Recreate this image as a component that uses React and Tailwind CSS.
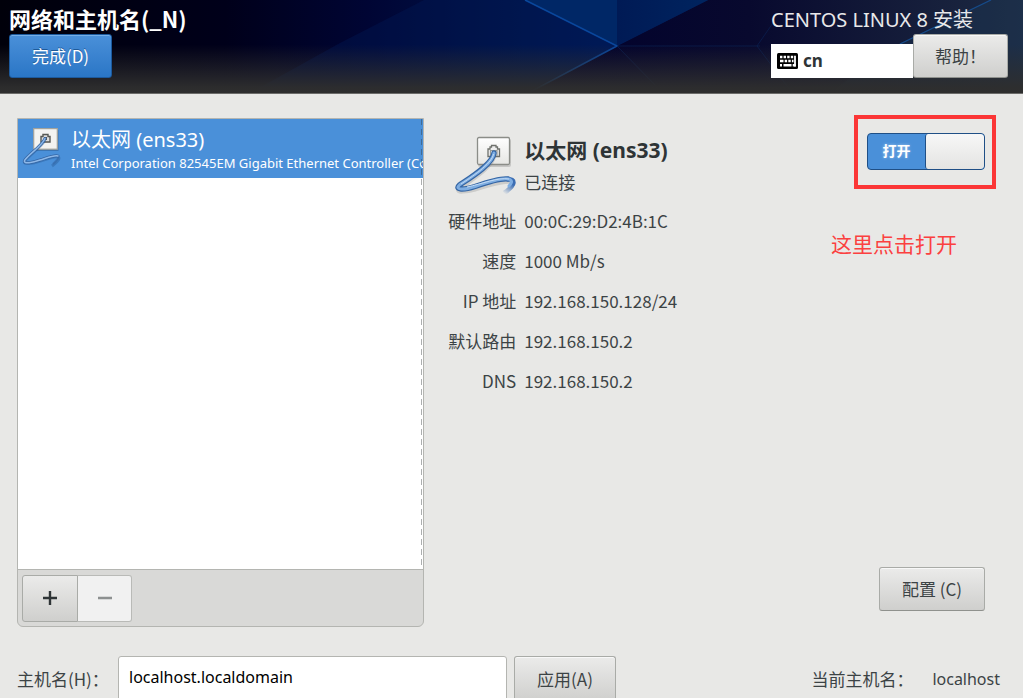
import { useId, useState } from "react";

const greyButton =
  "flex items-center justify-center rounded-[3px] border border-[#a9aba7] border-b-[#8f918d] bg-linear-to-b from-[#ebebea] to-[#cfcfcd] text-[17px] leading-6 text-[#3c4345] shadow-[inset_0_1px_0_#f8f8f8]";

const details = [
  ["硬件地址", "00:0C:29:D2:4B:1C"],
  ["速度", "1000 Mb/s"],
  ["IP 地址", "192.168.150.128/24"],
  ["默认路由", "192.168.150.2"],
  ["DNS", "192.168.150.2"],
];

function HeaderArt() {
  return (
    <svg
      className="absolute inset-0 h-full w-full"
      viewBox="0 0 1023 93"
      preserveAspectRatio="none"
      aria-hidden="true"
    >
      <defs>
        <linearGradient id="sky" x1="0" x2="1" y1="0" y2="0">
          <stop offset="0" stopColor="#00000a" />
          <stop offset="0.22" stopColor="#00001a" />
          <stop offset="0.36" stopColor="#000534" />
          <stop offset="0.48" stopColor="#001246" />
          <stop offset="0.6" stopColor="#001a58" />
        </linearGradient>
        <linearGradient id="night" x1="0" x2="1" y1="0" y2="0">
          <stop offset="0" stopColor="#00002c" />
          <stop offset="0.45" stopColor="#08092e" />
          <stop offset="1" stopColor="#1d2a42" />
        </linearGradient>
        <linearGradient id="beam" x1="0" x2="1" y1="0" y2="0">
          <stop offset="0" stopColor="#001a55" />
          <stop offset="1" stopColor="#00245f" />
        </linearGradient>
        <linearGradient id="ground" x1="0" x2="0" y1="0" y2="1">
          <stop offset="0.48" stopColor="#2e2e2e" stopOpacity="0" />
          <stop offset="0.94" stopColor="#2e2e2e" stopOpacity="0.96" />
          <stop offset="1" stopColor="#2e2e2e" />
        </linearGradient>
      </defs>
      <rect width="1023" height="93" fill="url(#sky)" />
      <path d="M340 43L424 0H525L617 46L525 93H250Z" fill="#001a56" opacity="0.4" />
      <path d="M617 46L525 93H1023V0H708Z" fill="url(#night)" />
      <path d="M525 0H617V46Z" fill="#002766" />
      <path d="M617 0H708L617 46Z" fill="url(#beam)" />
      <path d="M525 0L617 46L530 92" fill="none" stroke="#0a479c" strokeWidth="1.6" />
      <path d="M617 46L655 85M617 46H760M757 46L775 20M757 46L790 90" fill="none" stroke="#0c2458" strokeWidth="1" opacity="0.6" />
      <path d="M890 48L991 0H1023V93H830Z" fill="#1c3857" opacity="0.35" />
      <path d="M900 44L991 0" stroke="#164b8a" strokeWidth="1.3" />
      <rect width="1023" height="93" fill="url(#ground)" />
    </svg>
  );
}

function KeyboardIcon() {
  return (
    <svg className="h-4 w-[21px] shrink-0" viewBox="0 0 21 16" aria-hidden="true">
      <rect width="21" height="16" rx="1.5" fill="#000" />
      <path d="M3 4H16.200" stroke="#fff" strokeWidth="2.6" strokeDasharray="2.400 1.200" />
      <path d="M3 8H6.500M7.700 8H10.100M11.300 8H13.700M14.900 8H16.500" stroke="#fff" strokeWidth="2.6" />
      <path d="M3 12.200H5M6.500 12.200H14.500M15.700 12.200H18.700" stroke="#fff" strokeWidth="2.4" />
      <path d="M18 2.700V13.400" stroke="#fff" strokeWidth="1.8" />
    </svg>
  );
}

function WiredIcon({ className }) {
  const id = useId();
  return (
    <svg className={className} viewBox="0 0 62 60" aria-hidden="true">
      <defs>
        <linearGradient id={id} x1="0" x2="0" y1="0" y2="1">
          <stop offset="0" stopColor="#fff" />
          <stop offset="1" stopColor="#e6e6e3" />
        </linearGradient>
        <linearGradient id={id + "c"} gradientUnits="userSpaceOnUse" x1="58" x2="50" y1="45" y2="58">
          <stop offset="0.2" stopColor="#3c6eb4" />
          <stop offset="1" stopColor="#3c6eb4" stopOpacity="0" />
        </linearGradient>
      </defs>
      <rect x="23" y="3" width="33" height="28" rx="2" fill="#777" opacity="0.3" />
      <rect x="22.5" y="1.5" width="32" height="27" rx="1.5" fill={`url(#${id})`} stroke="#8b8d88" strokeWidth="1.3" />
      <path d="M33 20.500V13H35V11H36.500V9.500H41V11H42.500V13H44.500V20.500Z" fill="#eee" stroke="#6f716c" strokeWidth="1.3" />
      <path d="M35.500 20V14.500H42V20" fill="none" stroke="#999b95" strokeWidth="1.2" />
      <path d="M39 20C36 32 15 44 5 52C-1 57 13 55 20 53C33 49 52 43 57 46" fill="none" stroke="#777" strokeOpacity="0.25" strokeWidth="5" />
      <path d="M39 17C38 28 15 42 4.500 49C-1 54 9 54 20 50.500C33 46 46 42 53 43" fill="none" stroke="#3465a4" strokeWidth="5.4" strokeLinecap="round" />
      <path d="M52 43C61 43 61 49 49 57" fill="none" stroke={`url(#${id}c)`} strokeWidth="4.600" />
      <path d="M39 17C38 28 15 42 4.500 49C-1 54 9 54 20 50.500C33 46 50 41 55 43.500C58 45 56 48 54 50" fill="none" stroke="#7faee2" strokeWidth="3" strokeLinecap="round" />
      <path d="M38.500 18C37 28 15 42 6 48M12 51C27 48 43 41 54 43" fill="none" stroke="#c3dbf5" strokeWidth="1" />
    </svg>
  );
}

function SmallWiredIcon({ className }) {
  return (
    <svg className={className} viewBox="0 0 40 42" aria-hidden="true">
      <rect x="12.500" y="2" width="24" height="21" fill="#274d77" opacity="0.4" />
      <rect x="11.700" y="0.600" width="23.600" height="20.600" fill="#f3f3f1" stroke="#a3a39c" strokeWidth="1.2" />
      <path d="M19 14V8.500H21V6.500H26V8.500H28V14Z" fill="#ddd" stroke="#555753" strokeWidth="1.4" />
      <rect x="22" y="9" width="3" height="3" fill="#555753" />
      <path d="M23 12C20 19 7 27 2.500 33.500C1 37 11 35.500 18 33C27 30 36 27.500 37 30C37 32 34 35 30 38" fill="none" stroke="#1f4f8a" strokeOpacity="0.35" strokeWidth="3" />
      <path d="M23 10.500C20 18 7 26 2.500 32.500C1 36.500 11 34.500 18 32C26 29.500 33 26.500 36 28" fill="none" stroke="#3465a4" strokeWidth="3" strokeLinecap="round" />
      <path d="M36 28C37.500 30 34 33 31 36" fill="none" stroke="#3465a4" strokeOpacity="0.5" strokeWidth="2" />
      <path d="M23 10.500C20 18 7 26 2.500 32.500C1 36.500 11 34.500 18 32C26 29.500 33 26.500 36 28" fill="none" stroke="#8db8e8" strokeWidth="1.500" strokeLinecap="round" />
    </svg>
  );
}

export default function App() {
  const [on, setOn] = useState(true);
  const [host, setHost] = useState("localhost.localdomain");

  return (
    <div className="flex h-screen flex-col overflow-hidden bg-[#e8e8e6] font-['Noto_Sans_CJK_SC',sans-serif] text-[17px] leading-6 text-[#3c4345]">
      <header className="relative shrink-0 border-b border-[#6b6b69] bg-[#00001a]">
        <HeaderArt />
        <div className="relative flex h-[93px] justify-between pr-[15px] pl-[9px]">
          <div>
            <h1 className="pt-[3px] text-[22px] leading-[30px] font-bold text-white">网络和主机名(_N)</h1>
            <button
              type="button"
              className="mt-px flex h-11 w-[103px] items-center justify-center rounded-[3px] border border-[#1c5a9e] bg-linear-to-b from-[#4a90d9] to-[#2a76c6] text-[17px] leading-6 text-white shadow-[inset_0_1px_0_#76aee6] [text-shadow:0_-1px_0_#1f5a99]"
            >
              完成(D)
            </button>
          </div>
          <div>
            <p className="pt-[5px] font-['Noto_Sans','Noto_Sans_CJK_SC',sans-serif] text-[20px] leading-[29px] text-[#e8e8ea]">
              CENTOS LINUX 8 安装
            </p>
            <div className="flex items-end">
              <button
                type="button"
                className="flex h-[34px] w-[142px] items-center gap-[5px] bg-white pl-[6px] font-['Noto_Sans',sans-serif] text-[17px] font-bold text-[#2e3436]"
              >
                <KeyboardIcon />
                cn
              </button>
              <button type="button" className={greyButton + " h-11 w-[95px]"}>
                帮助！
              </button>
            </div>
          </div>
        </div>
      </header>

      <main className="grid shrink-0 grid-cols-[7fr_10fr] px-[17px] pt-6">
        <section className="overflow-hidden rounded-b-md border border-[#b4b5b1] bg-[#d9d9d7]">
          <ul className="relative h-[451px] border-b border-[#b4b5b1] bg-white">
            <li className="flex h-[59px] items-center bg-[#4a90d9] pl-1 text-white">
              <SmallWiredIcon className="h-[42px] w-10 shrink-0" />
              <div className="min-w-0 pt-[3px] pl-[9px]">
                <p className="font-['Noto_Sans','Noto_Sans_CJK_SC',sans-serif] text-[20px] leading-[26px]">以太网 (ens33)</p>
                <p className="overflow-hidden font-['Noto_Sans',sans-serif] text-[13px] leading-5 whitespace-nowrap">
                  Intel Corporation 82545EM Gigabit Ethernet Controller (Copper)
                </p>
              </div>
            </li>
            <li
              aria-hidden="true"
              className="absolute inset-y-0 right-px w-px bg-[repeating-linear-gradient(#2e343666_0_6px,transparent_6px_10px)]"
            />
          </ul>
          <div className="flex h-14 items-center pl-[4px]">
            <button
              type="button"
              aria-label="添加"
              className="flex h-[47px] w-14 items-center justify-center rounded-l-[3px] border border-[#a9aba7] bg-linear-to-b from-[#ebebea] to-[#cfcfcd]"
            >
              <svg className="size-[14px]" viewBox="0 0 14 14" aria-hidden="true">
                <path d="M0 7H14M7 0V14" stroke="#2e3436" strokeWidth="2.4" />
              </svg>
            </button>
            <button
              type="button"
              disabled
              aria-label="删除"
              className="flex h-[47px] w-[54px] items-center justify-center rounded-r-[3px] border border-l-0 border-[#b9bab7] bg-[#f1f1f1]"
            >
              <svg className="size-[14px]" viewBox="0 0 14 14" aria-hidden="true">
                <path d="M0 7H14" stroke="#8d9090" strokeWidth="2.4" />
              </svg>
            </button>
          </div>
        </section>

        <section className="flex flex-col justify-between pr-[21px] pb-4 pl-6">
          <div className="flex justify-between pt-[15px]">
            <div>
              <div className="flex pt-[3px] pl-[7px]">
                <WiredIcon className="h-[60px] w-[62px] shrink-0" />
                <div className="pl-[7px]">
                  <h2 className="font-['Noto_Sans','Noto_Sans_CJK_SC',sans-serif] text-[21px] leading-7 font-bold text-[#2e3436]">
                    以太网 (ens33)
                  </h2>
                  <p className="pt-[6px]">已连接</p>
                </div>
              </div>
              <dl className="grid grid-cols-[68px_auto] gap-x-2 pt-[5px] leading-[40px]">
                {details.map(([name, value]) => (
                  <div key={name} className="contents">
                    <dt className="text-right whitespace-nowrap">{name}</dt>
                    <dd>{value}</dd>
                  </div>
                ))}
              </dl>
            </div>
            <div className="relative h-9">
              <button
                type="button"
                role="switch"
                aria-checked={on}
                aria-label="以太网"
                onClick={() => setOn(!on)}
                className="flex h-[37px] w-[118px] overflow-hidden rounded-[4px] border border-[#1f4f86] bg-[#4a90d9]"
              >
                <span className="flex h-full flex-1 items-center justify-center pb-1 text-[14px] font-bold text-white [text-shadow:0_0_3px_#ffffff80]">
                  打开
                </span>
                <span className="h-full w-[59px] rounded-[3px] border-l border-[#1f4f86] bg-linear-to-b from-[#f7f7f7] to-[#e4e4e2]" />
              </button>
              <span className="pointer-events-none absolute -top-[18px] -right-[11px] h-[74px] w-[142px] border-4 border-[#fb3636]" />
              <p className="absolute top-[94px] right-7 text-[21px] leading-8 whitespace-nowrap text-[#fb4040]">
                这里点击打开
              </p>
            </div>
          </div>
          <button type="button" className={greyButton + " h-11 w-[106px] self-end"}>
            配置 (C)
          </button>
        </section>
      </main>

      <footer className="flex shrink-0 items-center justify-between pt-[29px] pr-[23px] pl-[17px]">
        <div className="flex items-center">
          <label htmlFor="hostname" className="w-[101px] whitespace-nowrap">
            主机名(H)：
          </label>
          <input
            id="hostname"
            value={host}
            onChange={(e) => setHost(e.target.value)}
            className="h-[46px] w-[389px] rounded-[3px] border border-[#b4b5b1] bg-white px-[10px] pb-1 font-['Noto_Sans',sans-serif] text-[16px] text-black"
          />
          <button type="button" className={greyButton + " ml-[7px] h-[46px] w-[102px]"}>
            应用(A)
          </button>
        </div>
        <p className="flex gap-[19px]">
          <span>当前主机名：</span>
          <span className="font-['Noto_Sans',sans-serif] text-[16px]">localhost</span>
        </p>
      </footer>
    </div>
  );
}
